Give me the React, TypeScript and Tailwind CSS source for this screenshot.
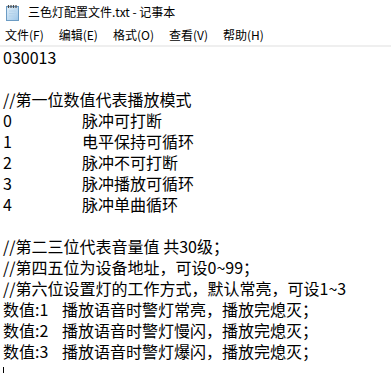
import React from 'react';

const menus = ['文件(F)', '编辑(E)', '格式(O)', '查看(V)', '帮助(H)'];

const modes = [
  ['0', '脉冲可打断'],
  ['1', '电平保持可循环'],
  ['2', '脉冲不可打断'],
  ['3', '脉冲播放可循环'],
  ['4', '脉冲单曲循环'],
];

const lights = [
  ['数值:1', '播放语音时警灯常亮，播放完熄灭；'],
  ['数值:2', '播放语音时警灯慢闪，播放完熄灭；'],
  ['数值:3', '播放语音时警灯爆闪，播放完熄灭；'],
];

function NotepadIcon() {
  return (
    <svg width="16" height="17" viewBox="0 0 16 17">
      <defs>
        <linearGradient id="pad" x1="0" y1="0" x2="1" y2="1">
          <stop offset="0" stopColor="#e4f1fb" />
          <stop offset="1" stopColor="#9cc6e8" />
        </linearGradient>
      </defs>
      <rect x="1.5" y="2.5" width="12" height="14" fill="url(#pad)" stroke="#6c9cc4" />
      <path d="M4 7h7M4 9.5h7M4 12h7" stroke="#b4d2ea" strokeWidth="1" />
      <path d="M3.5 1v3M6 1v3M8.5 1v3M11 1v3" stroke="#4a4a4a" strokeWidth="1.2" />
    </svg>
  );
}

export default function App() {
  return (
    <div
      className="w-[391px] h-[373px] bg-white overflow-hidden text-black"
      style={{ fontFamily: '"Noto Sans CJK SC", "Noto Sans", sans-serif' }}
    >
      {/* title bar */}
      <div className="h-[24px] flex items-center pl-[5px]">
        <NotepadIcon />
        <span className="ml-[7px] text-[12px] leading-none">三色灯配置文件.txt - 记事本</span>
      </div>

      {/* menu bar */}
      <div className="h-[21px] flex items-center gap-[15px] pl-[5px] text-[12px] leading-none">
        {menus.map((m) => (
          <span key={m}>{m}</span>
        ))}
      </div>
      <div className="h-[2px] bg-[#efefef]" />

      {/* editor */}
      <div className="pl-[3px] text-[16px] leading-[21px] whitespace-pre">
        <div>030013</div>
        <div>&nbsp;</div>
        <div>//第一位数值代表播放模式</div>
        {modes.map(([n, t]) => (
          <div key={n} className="flex">
            <span className="w-[79px]">{n}</span>
            <span>{t}</span>
          </div>
        ))}
        <div>&nbsp;</div>
        <div>//第二三位代表音量值 共30级；</div>
        <div>//第四五位为设备地址，可设0~99；</div>
        <div>//第六位设置灯的工作方式，默认常亮，可设1~3</div>
        {lights.map(([n, t]) => (
          <div key={n} className="flex">
            <span className="w-[59px]">{n}</span>
            <span>{t}</span>
          </div>
        ))}
        <div className="h-[21px] flex items-center">
          <span className="w-px h-[12px] bg-black" />
        </div>
      </div>
    </div>
  );
}
